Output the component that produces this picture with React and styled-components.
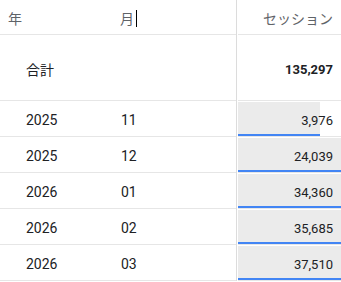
import React from "react";
import styled, { createGlobalStyle } from "styled-components";

const GlobalStyle = createGlobalStyle`
  body {
    margin: 0;
    background: #ffffff;
    font-family: Roboto, "Noto Sans CJK JP", "Noto Sans", sans-serif;
    color: #202124;
  }
`;

const rows = [
  { year: "2025", month: "11", value: "3,976", width: 80 },
  { year: "2025", month: "12", value: "24,039", width: 100 },
  { year: "2026", month: "01", value: "34,360", width: 100 },
  { year: "2026", month: "02", value: "35,685", width: 100 },
  { year: "2026", month: "03", value: "37,510", width: 100 },
];

const App = () => {
  return (
    <Table>
      <GlobalStyle />
      <Row $height={34}>
        <Dims>
          <HeadCell>年</HeadCell>
          <HeadCell $pad={7}>
            月<Caret />
          </HeadCell>
        </Dims>
        <Divider />
        <ValueCell>
          <HeadValue>セッション</HeadValue>
        </ValueCell>
      </Row>
      <Row $height={65}>
        <Dims>
          <Cell $pad={26}>合計</Cell>
          <Cell />
        </Dims>
        <Divider />
        <ValueCell>
          <Total>135,297</Total>
        </ValueCell>
      </Row>
      {rows.map((r) => (
        <Row $height={35} key={r.year + r.month}>
          <Dims>
            <Cell $pad={26}>{r.year}</Cell>
            <Cell $pad={8}>{r.month}</Cell>
          </Dims>
          <Divider />
          <ValueCell>
            <Bar>
              <Fill style={{ width: r.width + "%" }} />
              <Value>{r.value}</Value>
            </Bar>
          </ValueCell>
        </Row>
      ))}
    </Table>
  );
};

export default App;

const Table = styled.div`
  width: 341px;
  overflow: hidden;
`;

const Row = styled.div`
  display: grid;
  grid-template-columns: 236px 1px 1fr;
  height: ${(p) => p.$height + 1}px;
`;

const Dims = styled.div`
  display: grid;
  grid-template-columns: 113px 1fr;
  border-bottom: 1px solid #e6e6e6;
`;

const Divider = styled.div`
  background: #dcdcdc;
`;

const ValueCell = styled.div`
  margin-left: 1px;
  border-bottom: 1px solid #e6e6e6;
  padding-top: 1px;
  display: flex;
  flex-direction: column;
`;

const HeadCell = styled.div`
  display: flex;
  align-items: center;
  padding-left: ${(p) => p.$pad ?? 8}px;
  padding-top: 2px;
  font-family: "Noto Sans CJK JP", sans-serif;
  font-size: 14px;
  color: #5f6368;
`;

const Caret = styled.span`
  display: inline-block;
  width: 1px;
  height: 17px;
  margin-left: 2px;
  background: #000000;
`;

const HeadValue = styled.div`
  flex: 1;
  display: flex;
  align-items: center;
  justify-content: flex-end;
  padding-right: 8px;
  padding-top: 1px;
  font-family: "Noto Sans CJK JP", sans-serif;
  font-size: 14px;
  color: #5f6368;
`;

const Cell = styled.div`
  display: flex;
  align-items: center;
  padding-left: ${(p) => p.$pad ?? 0}px;
  padding-top: 2px;
  font-family: Roboto, "Noto Sans CJK JP", sans-serif;
  font-size: 14px;
  color: #202124;
`;

const Total = styled.div`
  flex: 1;
  display: flex;
  align-items: center;
  justify-content: flex-end;
  padding-right: 8px;
  padding-top: 2px;
  font-family: Roboto, sans-serif;
  font-weight: 700;
  font-size: 13px;
  color: #202124;
`;

const Bar = styled.div`
  position: relative;
  flex: 1;
  display: flex;
  align-items: center;
  justify-content: flex-end;
`;

const Fill = styled.div`
  position: absolute;
  left: 0;
  top: 0;
  bottom: 0;
  background: #ebebeb;
  border-bottom: 2px solid #4285f4;
`;

const Value = styled.div`
  position: relative;
  padding-right: 8px;
  padding-top: 2px;
  font-family: Roboto, sans-serif;
  font-size: 13px;
  color: #202124;
`;
